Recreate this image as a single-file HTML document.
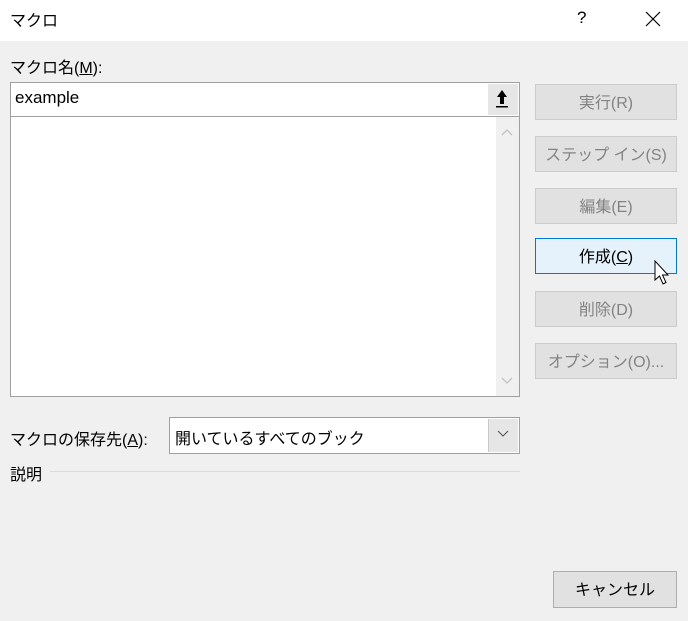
<!DOCTYPE html>
<html><head><meta charset="utf-8"><style>
*{margin:0;padding:0;box-sizing:border-box}
body{width:688px;height:621px;background:#f0f0f0;font-family:"Liberation Sans","Noto Sans CJK JP",sans-serif;color:#000;position:relative;overflow:hidden;font-size:16px}
.a{position:absolute}
.title{left:0;top:0;width:688px;height:41px;background:#fff}
.btn{position:absolute;left:535px;width:142px;height:36px;background:#e1e1e1;border:1px solid #cccccc;color:#838383;text-align:center;line-height:37px;font-size:16px}
</style></head><body>
<div class="a title"></div>
<div class="a" style="left:10px;top:7px;font-size:16px">マクロ</div>
<div class="a" style="left:577px;top:8px;font-size:17px">?</div>
<svg class="a" style="left:645px;top:11px" width="16" height="16"><path d="M1 1L15 15M15 1L1 15" stroke="#000" stroke-width="1.2"/></svg>
<div class="a" style="left:10px;top:54px">マクロ名(<u>M</u>):</div>
<div class="a" style="left:10px;top:82px;width:510px;height:35px;background:#fff;border:1px solid #a0a0a0"></div>
<div class="a" style="left:15px;top:88px;font-size:17px">example</div>
<div class="a" style="left:488px;top:84px;width:30px;height:31px;background:#e6e6e6"></div>
<svg class="a" style="left:494px;top:88px" width="16" height="22"><path d="M8 2L3 9H6V16H10V9H13Z" fill="#000"/><rect x="2" y="18" width="12" height="1.5" fill="#000"/></svg>
<div class="a" style="left:10px;top:116px;width:510px;height:281px;background:#fff;border:1px solid #a0a0a0"></div>
<div class="a" style="left:496px;top:117px;width:23px;height:279px;background:#f0f0f0"></div>
<svg class="a" style="left:500px;top:128px" width="14" height="10"><path d="M2 7L7 2L12 7" stroke="#c2c2c2" fill="none" stroke-width="1.3"/></svg>
<svg class="a" style="left:500px;top:376px" width="14" height="10"><path d="M2 2L7 7L12 2" stroke="#c2c2c2" fill="none" stroke-width="1.3"/></svg>
<div class="btn" style="top:84px">実行(R)</div>
<div class="btn" style="top:136px">ステップ イン(S)</div>
<div class="btn" style="top:188px">編集(E)</div>
<div class="btn" style="top:238px;background:#e5f1fb;border-color:#0078d7;color:#000">作成(<u>C</u>)</div>
<div class="btn" style="top:291px">削除(D)</div>
<div class="btn" style="top:343px">オプション(O)...</div>
<svg class="a" style="left:653px;top:260px" width="20" height="28"><path d="M2 1V20L6.5 16L10 24L13 22.5L9.5 15H15Z" fill="#fff" stroke="#000" stroke-width="1"/></svg>
<div class="a" style="left:10px;top:426px">マクロの保存先(<u>A</u>):</div>
<div class="a" style="left:169px;top:417px;width:351px;height:37px;background:#fff;border:1px solid #a0a0a0"></div>
<div class="a" style="left:175px;top:425px">開いているすべてのブック</div>
<div class="a" style="left:488px;top:419px;width:30px;height:33px;background:#e6e6e6;border-left:1px solid #c8c8c8"></div>
<svg class="a" style="left:497px;top:430px" width="12" height="8"><path d="M1 1L6 6L11 1" stroke="#555" fill="none" stroke-width="1.1"/></svg>
<div class="a" style="left:10px;top:461px">説明</div>
<div class="a" style="left:50px;top:471px;width:470px;height:1px;background:#dcdcdc"></div>
<div class="btn" style="left:553px;top:571px;width:124px;height:37px;color:#000;border-color:#adadad;line-height:38px">キャンセル</div>
</body></html>
